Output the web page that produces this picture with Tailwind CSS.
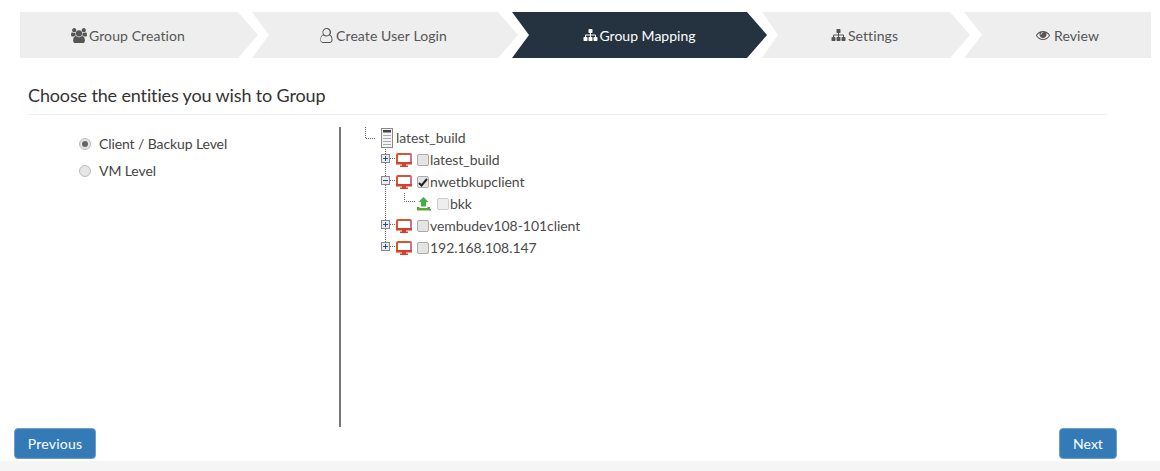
<!DOCTYPE html>
<html lang="en">
<head>
  <meta charset="UTF-8" />
  <title>Group Mapping</title>
  <script src="https://cdn.jsdelivr.net/npm/@tailwindcss/browser@4"></script>
</head>
<body class="bg-white text-[#555] font-['Lato',sans-serif] text-[14px]">
  <div class="h-[471px] w-[1160px] flex flex-col overflow-hidden">

    <!-- wizard steps -->
    <div class="flex mt-3 ml-5 h-[46px] shrink-0 text-[14px] tracking-[0.1px]">
      <div class="w-[238px] bg-[#eee] flex items-center justify-center gap-[2px] pr-[22px] [clip-path:polygon(0_0,218px_0,238px_23px,218px_46px,0_46px)]">
        <svg class="w-[16px] h-[15px]" viewBox="0 0 1920 1792" fill="currentColor"><path d="M593 896q-162 5-265 128h-134q-82 0-138-40.5t-56-118.5q0-353 124-353 6 0 43.5 21t97.5 42.5 119 21.5q67 0 133-23-5 37-5 66 0 139 81 256zm1071 637q0 120-73 189.5t-194 69.5h-874q-121 0-194-69.5t-73-189.5q0-53 3.5-103.5t14-109 26.5-108.5 43-97.5 62-81 85.5-53.5 111.5-20q10 0 43 21.5t73 48 107 48 135 21.5 135-21.5 107-48 73-48 43-21.5q61 0 111.5 20t85.5 53.5 62 81 43 97.5 26.5 108.5 14 109 3.5 103.5zm-1024-1277q0 106-75 181t-181 75-181-75-75-181 75-181 181-75 181 75 75 181zm704 384q0 159-112.5 271.5t-271.5 112.5-271.5-112.5-112.5-271.5 112.5-271.5 271.5-112.5 271.5 112.5 112.5 271.5zm576 225q0 78-56 118.5t-138 40.5h-134q-103-123-265-128 81-117 81-256 0-29-5-66 66 23 133 23 59 0 119-21.5t97.5-42.5 43.5-21q124 0 124 353zm-128-609q0 106-75 181t-181 75-181-75-75-181 75-181 181-75 181 75 75 181z"/></svg>
        <span>Group Creation</span>
      </div>
      <div class="w-[266px] -ml-[6px] bg-[#eee] flex items-center justify-center gap-[3px] pr-[3px] [clip-path:polygon(0_0,246px_0,266px_23px,246px_46px,0_46px,17px_23px)]">
        <svg class="w-[13px] h-[15px]" viewBox="0 0 1408 1792" fill="currentColor"><path d="M1201 784q47 14 89.5 38t89 73 79.5 115.5 55 172 22 236.5q0 154-100 263.5t-241 109.5h-778q-141 0-241-109.5t-100-263.5q0-131 22-236.5t55-172 79.5-115.5 89-73 89.5-38q-79-125-79-272 0-104 40.5-198.5t109.5-163.5 163.5-109.5 198.5-40.5 198.5 40.5 163.5 109.5 109.5 163.5 40.5 198.5q0 147-79 272zm-385-656q-159 0-271.5 112.5t-112.5 271.5 112.5 271.5 271.5 112.5 271.5-112.5 112.5-271.5-112.5-271.5-271.5-112.5zm389 1536q88 0 150.5-71.5t62.5-173.5q0-239-78.5-377t-225.5-145q-145 127-336 127t-336-127q-147 7-225.5 145t-78.5 377q0 102 62.5 173.5t150.5 71.5h778z" transform="translate(-112 0)"/></svg>
        <span>Create User Login</span>
      </div>
      <div class="w-[255px] -ml-[6px] bg-[#253240] text-white tracking-normal flex items-center justify-center gap-[2px] pr-[1px] [clip-path:polygon(0_0,235px_0,255px_23px,235px_46px,0_46px,17px_23px)]">
        <svg class="w-[15px] h-[14px]" viewBox="0 0 1792 1792" fill="currentColor"><path d="M1792 1248v320q0 40-28 68t-68 28h-320q-40 0-68-28t-28-68v-320q0-40 28-68t68-28h96v-192h-512v192h96q40 0 68 28t28 68v320q0 40-28 68t-68 28h-320q-40 0-68-28t-28-68v-320q0-40 28-68t68-28h96v-192h-512v192h96q40 0 68 28t28 68v320q0 40-28 68t-68 28h-320q-40 0-68-28t-28-68v-320q0-40 28-68t68-28h96v-192q0-52 38-90t90-38h512v-192h-96q-40 0-68-28t-28-68v-320q0-40 28-68t68-28h320q40 0 68 28t28 68v320q0 40-28 68t-68 28h-96v192h512q52 0 90 38t38 90v192h96q40 0 68 28t28 68z"/></svg>
        <span>Group Mapping</span>
      </div>
      <div class="w-[208px] -ml-[5px] bg-[#eee] flex items-center justify-center gap-[2px] pr-[3px] [clip-path:polygon(0_0,188px_0,208px_23px,188px_46px,0_46px,16px_23px)]">
        <svg class="w-[15px] h-[14px]" viewBox="0 0 1792 1792" fill="currentColor"><path d="M1792 1248v320q0 40-28 68t-68 28h-320q-40 0-68-28t-28-68v-320q0-40 28-68t68-28h96v-192h-512v192h96q40 0 68 28t28 68v320q0 40-28 68t-68 28h-320q-40 0-68-28t-28-68v-320q0-40 28-68t68-28h96v-192h-512v192h96q40 0 68 28t28 68v320q0 40-28 68t-68 28h-320q-40 0-68-28t-28-68v-320q0-40 28-68t68-28h96v-192q0-52 38-90t90-38h512v-192h-96q-40 0-68-28t-28-68v-320q0-40 28-68t68-28h320q40 0 68 28t28 68v320q0 40-28 68t-68 28h-96v192h512q52 0 90 38t38 90v192h96q40 0 68 28t28 68z"/></svg>
        <span>Settings</span>
      </div>
      <div class="w-[187px] -ml-[6px] bg-[#eee] flex items-center justify-center gap-[4px] pl-[20px] [clip-path:polygon(0_0,187px_0,187px_46px,0_46px,18px_23px)]">
        <svg class="w-[14px] h-[14px]" viewBox="0 0 1792 1792" fill="currentColor"><path d="M1664 960q-152-236-381-353 61 104 61 225 0 185-131.5 316.5t-316.5 131.5-316.5-131.5-131.5-316.5q0-121 61-225-229 117-381 353 133 205 333.5 326.5t434.5 121.5 434.5-121.5 333.5-326.5zm-720-384q0-20-14-34t-34-14q-125 0-214.5 89.5t-89.5 214.5q0 20 14 34t34 14 34-14 14-34q0-86 61-147t147-61q20 0 34-14t14-34zm848 384q0 34-20 69-140 230-376.5 368.5t-499.5 138.5-499.5-139-376.5-368q-20-35-20-69t20-69q140-229 376.5-368t499.5-139 499.5 139 376.5 368q20 35 20 69z"/></svg>
        <span>Review</span>
      </div>
    </div>

    <!-- heading -->
    <div class="ml-7 w-[1079px] mt-[24px] h-[33px] border-b border-[#eee] shrink-0 text-[18px] leading-[26px] tracking-[-0.14px] text-[#333]">Choose the entities you wish to Group</div>

    <!-- content -->
    <div class="flex ml-7 mt-3 h-[300px] shrink-0">
      <div class="w-[313px] border-r-2 border-[#777] pl-[51px] pt-[3px] tracking-[-0.1px]">
        <label class="flex items-center h-[27px] gap-[8px] text-[#444]">
          <span class="w-[12px] h-[12px] rounded-full border border-[#bbb] bg-[#e6e6e6] flex items-center justify-center"><span class="w-[6px] h-[6px] rounded-full bg-[#666]"></span></span>
          <span>Client / Backup Level</span>
        </label>
        <label class="flex items-center h-[27px] gap-[8px] text-[#444]">
          <span class="w-[12px] h-[12px] rounded-full border border-[#bbb] bg-[#e6e6e6]"></span>
          <span>VM Level</span>
        </label>
      </div>

      <div class="pl-[19px] text-[#4a4a4a] tracking-[-0.05px]">
        <!-- root -->
        <div class="flex items-center h-[22px]">
          <svg width="36" height="22" viewBox="0 0 36 22"><path d="M5.5 0V11.500H16" stroke="#666" stroke-dasharray="1 1" fill="none"/><rect x="21.500" y="1.500" width="11" height="19" fill="#f4f4f4" stroke="#888"/><path d="M23 3h8v2.500h-8z" fill="#444"/><path d="M23 8.500h8M23 11.500h8M23 14.500h8M23 17.500h8" stroke="#aaa"/></svg>
          <span class="pb-[2px]">latest_build</span>
        </div>
        <!-- clients -->
        <div class="flex items-center h-[22px]">
          <svg width="36" height="22" viewBox="0 0 36 22"><path d="M25.500 0V22M30 9.500H36" stroke="#666" stroke-dasharray="1 1" fill="none"/><rect x="21.500" y="5.500" width="8" height="8" fill="#e8ecf2" stroke="#888"/><path d="M23 9.500h5M25.500 7v5" stroke="#2d4a9a"/></svg>
          <svg class="shrink-0" width="16" height="14" viewBox="0 0 16 14"><rect x="1" y="1" width="14" height="9" rx="1" fill="#fff" stroke="#d9552c" stroke-width="2"/><path d="M15 1.500V9.500" stroke="#c77ac9" stroke-width="1.500"/><path d="M0 9h16v2.500H0zM6 11h4v1.500h2V14H4v-1.500h2z" fill="#d4402a"/></svg>
          <span class="ml-[5px] w-[12px] h-[12px] rounded-[2px] border border-[#aaa] bg-[#e4e4e4]"></span>
          <span class="ml-px pb-[2px]">latest_build</span>
        </div>
        <div class="flex items-center h-[22px]">
          <svg width="36" height="22" viewBox="0 0 36 22"><path d="M25.500 0V22M30 9.500H36" stroke="#666" stroke-dasharray="1 1" fill="none"/><rect x="21.500" y="5.500" width="8" height="8" fill="#e8ecf2" stroke="#888"/><path d="M23 9.500h5" stroke="#2d4a9a"/></svg>
          <svg class="shrink-0" width="16" height="14" viewBox="0 0 16 14"><rect x="1" y="1" width="14" height="9" rx="1" fill="#fff" stroke="#d9552c" stroke-width="2"/><path d="M15 1.500V9.500" stroke="#c77ac9" stroke-width="1.500"/><path d="M0 9h16v2.500H0zM6 11h4v1.500h2V14H4v-1.500h2z" fill="#d4402a"/></svg>
          <span class="ml-[5px] w-[12px] h-[12px] rounded-[2px] border border-[#aaa] bg-[#e4e4e4] flex items-center justify-center">
            <svg width="10" height="9" viewBox="0 0 10 9"><path d="M1 5l2.500 2.500L9 1" stroke="#222" stroke-width="2" fill="none"/></svg>
          </span>
          <span class="ml-px pb-[2px]">nwetbkupclient</span>
        </div>
        <div class="flex items-center h-[22px]">
          <svg width="56" height="22" viewBox="0 0 56 22"><path d="M25.500 0V22M44.500 0V8.500H55" stroke="#666" stroke-dasharray="1 1" fill="none"/></svg>
          <svg class="shrink-0" width="15" height="14" viewBox="0 0 15 14"><path d="M7.500 0L12.500 5H10V9.500H5V5H2.500z" fill="#3fae49"/><path d="M1 10h2.500v1H11.500v-1H14V13.500H1z" fill="#5aa832"/><path d="M13.500 12h1.500v1.500h-1.500z" fill="#3a9a9a"/></svg>
          <span class="ml-[6px] w-[12px] h-[12px] rounded-[2px] border border-[#ccc] bg-[#eee]"></span>
          <span class="ml-px pb-[2px]">bkk</span>
        </div>
        <div class="flex items-center h-[22px]">
          <svg width="36" height="22" viewBox="0 0 36 22"><path d="M25.500 0V22M30 9.500H36" stroke="#666" stroke-dasharray="1 1" fill="none"/><rect x="21.500" y="5.500" width="8" height="8" fill="#e8ecf2" stroke="#888"/><path d="M23 9.500h5M25.500 7v5" stroke="#2d4a9a"/></svg>
          <svg class="shrink-0" width="16" height="14" viewBox="0 0 16 14"><rect x="1" y="1" width="14" height="9" rx="1" fill="#fff" stroke="#d9552c" stroke-width="2"/><path d="M15 1.500V9.500" stroke="#c77ac9" stroke-width="1.500"/><path d="M0 9h16v2.500H0zM6 11h4v1.500h2V14H4v-1.500h2z" fill="#d4402a"/></svg>
          <span class="ml-[5px] w-[12px] h-[12px] rounded-[2px] border border-[#aaa] bg-[#e4e4e4]"></span>
          <span class="ml-px pb-[2px]">vembudev108-101client</span>
        </div>
        <div class="flex items-center h-[22px]">
          <svg width="36" height="22" viewBox="0 0 36 22"><path d="M25.500 0V9.500M30 9.500H36" stroke="#666" stroke-dasharray="1 1" fill="none"/><rect x="21.500" y="5.500" width="8" height="8" fill="#e8ecf2" stroke="#888"/><path d="M23 9.500h5M25.500 7v5" stroke="#2d4a9a"/></svg>
          <svg class="shrink-0" width="16" height="14" viewBox="0 0 16 14"><rect x="1" y="1" width="14" height="9" rx="1" fill="#fff" stroke="#d9552c" stroke-width="2"/><path d="M15 1.500V9.500" stroke="#c77ac9" stroke-width="1.500"/><path d="M0 9h16v2.500H0zM6 11h4v1.500h2V14H4v-1.500h2z" fill="#d4402a"/></svg>
          <span class="ml-[5px] w-[12px] h-[12px] rounded-[2px] border border-[#aaa] bg-[#e4e4e4]"></span>
          <span class="ml-px pb-[2px]">192.168.108.147</span>
        </div>
      </div>
    </div>

    <!-- footer buttons -->
    <div class="flex justify-between pl-[14px] pr-[43px] mt-px shrink-0">
      <button class="w-[82px] h-[31px] pb-px rounded-[4px] bg-[#337ab7] border border-[#6f9ec8] text-white tracking-[0.2px]">Previous</button>
      <button class="w-[58px] h-[31px] pb-px rounded-[4px] bg-[#337ab7] border border-[#6f9ec8] text-white">Next</button>
    </div>
    <div class="mt-[2px] flex-1 bg-[#f5f5f5]"></div>
  </div>
</body>
</html>
